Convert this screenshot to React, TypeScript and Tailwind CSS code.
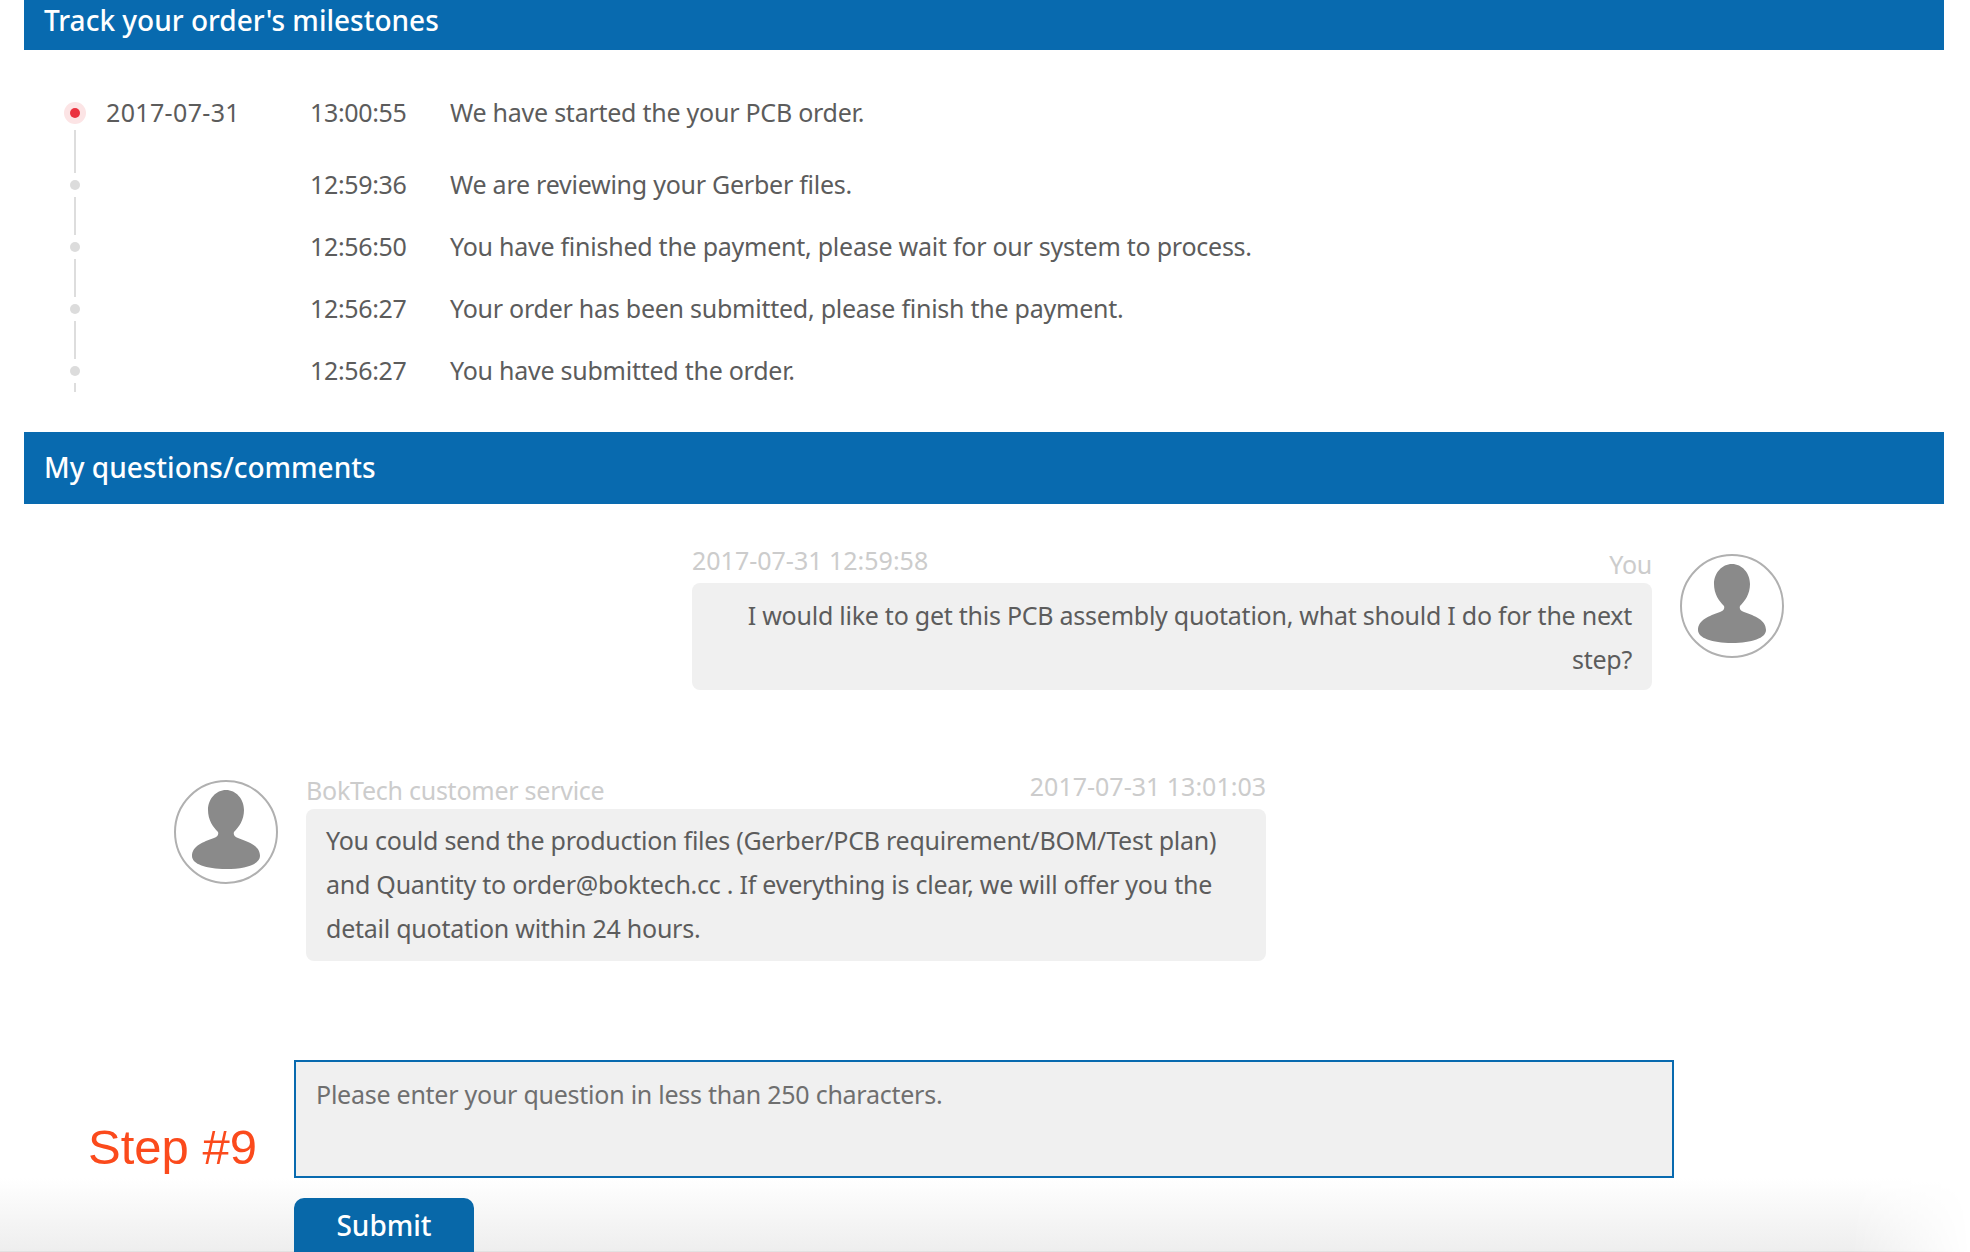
import React from "react";

const milestones = [
  { date: "2017-07-31", time: "13:00:55", text: "We have started the your PCB order.", active: true },
  { time: "12:59:36", text: "We are reviewing your Gerber files." },
  { time: "12:56:50", text: "You have finished the payment, please wait for our system to process." },
  { time: "12:56:27", text: "Your order has been submitted, please finish the payment." },
  { time: "12:56:27", text: "You have submitted the order.", last: true },
];

const Avatar = ({ className }: { className?: string }) => (
  <svg viewBox="0 0 104 104" className={`h-[104px] w-[104px] shrink-0 ${className ?? ""}`}>
    <circle cx="52" cy="52" r="51" fill="#fff" stroke="#b0b0b0" strokeWidth="2" />
    <path
      fill="#8a8a8a"
      d="M52 10C62 10 70 19 70 30C70 40 65 47 60 52C59 55 61 57 64 58C75 62 86 66 86 76C86 84 72 89 52 89C32 89 18 84 18 76C18 66 29 62 40 58C43 57 45 55 44 52C39 47 34 40 34 30C34 19 42 10 52 10Z"
    />
  </svg>
);

const Milestone = ({
  date,
  time,
  text,
  active,
  last,
}: {
  date?: string;
  time: string;
  text: string;
  active?: boolean;
  last?: boolean;
}) => (
  <li className={`flex h-[62px] items-center ${active ? "mb-[10px]" : ""}`}>
    <div className="relative flex h-[22px] w-[22px] items-center justify-center">
      {active ? (
        <span className="flex h-[22px] w-[22px] items-center justify-center rounded-full bg-[#fce4e5]">
          <span className="h-[10px] w-[10px] rounded-full bg-[#ea3340]" />
        </span>
      ) : (
        <span className="h-[10px] w-[10px] rounded-full bg-[#dcdcdc]" />
      )}
      <span
        className={`absolute left-[10px] w-[2px] bg-[#dddddd] ${
          active ? "top-[28px] h-[43px]" : last ? "top-[23px] h-[9px]" : "top-[23px] h-[38px]"
        }`}
      />
    </div>
    <div className="ml-[20px] w-[204px] tracking-[0.35px]">{date}</div>
    <div className="w-[140px] tracking-[-0.35px]">{time}</div>
    <div>{text}</div>
  </li>
);

export default function App() {
  return (
    <div className="relative h-[1252px] overflow-hidden bg-white font-['Noto_Sans',sans-serif] text-[25px] tracking-[-0.25px] text-[#5c5c5c]">
      <div className="absolute inset-x-0 bottom-0 h-[74px] border-b border-[#e2e2e2] bg-gradient-to-b from-white to-[#eeeeee] [mask-image:linear-gradient(to_right,black,black_94%,transparent)]" />
      <div className="relative z-10 pl-[24px] pr-[26px]">
        <div className="flex h-[50px] items-start bg-[#086aaf] pl-[20px] text-[28px] font-medium leading-[40px] tracking-normal text-white">
          Track your order's milestones
        </div>
        <ul className="pb-[30px] pl-[40px] pt-[32px]">
          {milestones.map((m, i) => (
            <Milestone key={i} {...m} />
          ))}
        </ul>

        <div className="flex h-[72px] items-center bg-[#086aaf] pb-[2px] pl-[20px] text-[28px] font-medium tracking-normal text-white">
          My questions/comments
        </div>

        <div className="mt-[45px] flex justify-end gap-[28px] pr-[160px]">
          <div className="w-[960px]">
            <div className="flex h-[34px] justify-between text-[#cccccc]">
              <span className="leading-[22px] tracking-normal">2017-07-31 12:59:58</span>
              <span className="mt-[4px] leading-[22px]">You</span>
            </div>
            <div className="rounded-[8px] bg-[#f0f0f0] pb-[9px] pl-[40px] pr-[20px] pt-[10px] text-right leading-[44px]">
              I would like to get this PCB assembly quotation, what should I do for the next step?
            </div>
          </div>
          <Avatar className="mt-[5px]" />
        </div>

        <div className="mt-[85px] flex gap-[28px] pl-[150px]">
          <Avatar className="mt-[5px]" />
          <div className="w-[960px]">
            <div className="flex h-[34px] justify-between text-[#cccccc]">
              <span className="mt-[4px] leading-[22px]">BokTech customer service</span>
              <span className="leading-[22px] tracking-normal">2017-07-31 13:01:03</span>
            </div>
            <div className="rounded-[8px] bg-[#f0f0f0] pb-[11px] pl-[20px] pr-[20px] pt-[9px] leading-[44px]">
              You could send the production files (Gerber/PCB requirement/BOM/Test plan) and Quantity to order@boktech.cc . If everything is clear, we will offer you the detail quotation within 24 hours.
            </div>
          </div>
        </div>

        <div className="mt-[99px] flex pl-[64px]">
          <div className="mt-[58px] w-[206px] font-['Liberation_Sans',sans-serif] text-[49px] leading-[58px] tracking-normal text-[#fb4a1c]">
            Step #9
          </div>
          <div className="flex flex-col items-start">
            <textarea
              className="h-[118px] w-[1380px] resize-none border-2 border-[#086aaf] bg-[#f0f0f0] pl-[20px] pt-[14px] leading-[36px] outline-none placeholder:text-[#6f6f6f]"
              placeholder="Please enter your question in less than 250 characters."
            />
            <button className="mt-[20px] h-[70px] w-[180px] rounded-[10px] bg-[#0868a9] pb-[16px] text-[28px] font-medium tracking-normal text-white">
              Submit
            </button>
          </div>
        </div>
      </div>
    </div>
  );
}
